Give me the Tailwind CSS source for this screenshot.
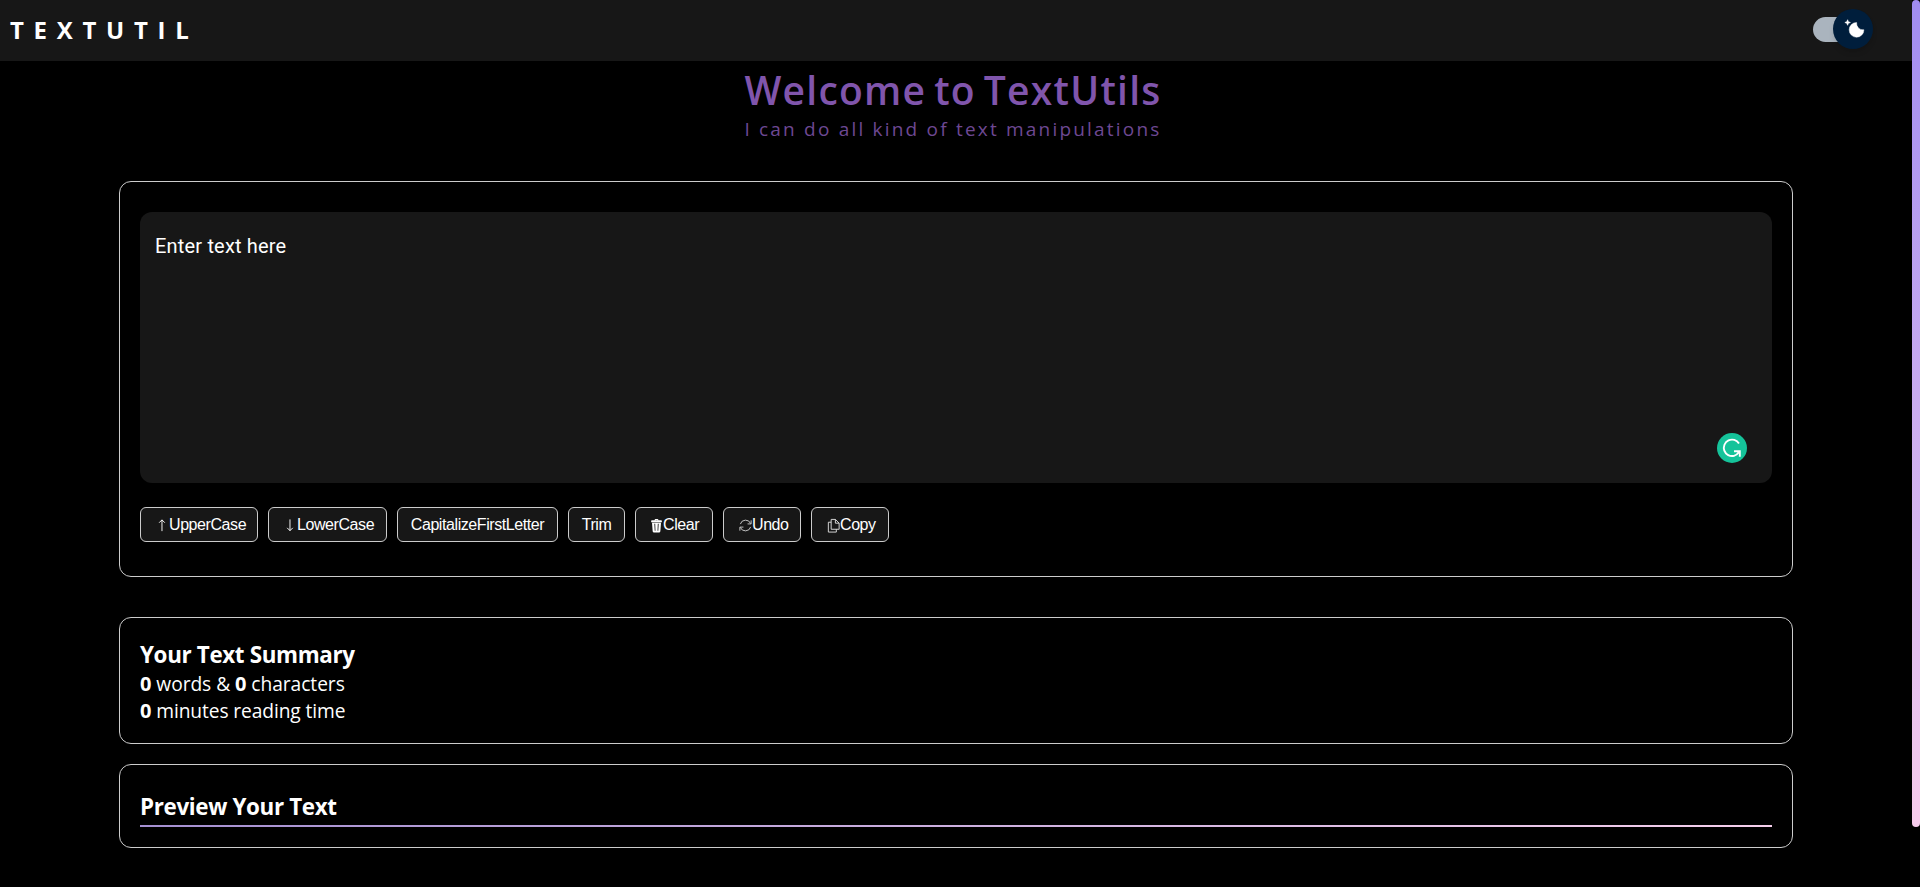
<!DOCTYPE html>
<html lang="en"><head><meta charset="utf-8"><title>TextUtils</title>
<script src="https://cdn.jsdelivr.net/npm/@tailwindcss/browser@4"></script></head>
<body class="relative h-[887px] overflow-hidden bg-black text-white font-['Open_Sans','Noto_Sans',sans-serif]">
<div class="w-[1912px]">
<nav class="flex h-[61px] items-center justify-between bg-[#171717] pb-0.5 pl-2.5 pr-[39px]">
<span class="text-[24px] leading-8 font-bold tracking-[9.7px]">TEXTUTIL</span>
<div class="relative h-10 w-[60px]">
<div class="mt-[7px] h-[25px] w-[52px] rounded-full bg-[#aab4be]"></div>
<div class="absolute -top-[1px] left-5 h-10 w-10 rounded-full bg-[#001e3c] shadow-md">
<svg class="mt-2 ml-2.5 size-[22px]" viewBox="0 0 20 20" fill="#fff"><path d="M4.2 2.5l-.7 1.8-1.8.7 1.8.7.7 1.8.6-1.8L6.700 5l-1.900-.7-.6-1.800z" stroke="#fff" stroke-width=".6"/><path d="M19.2 10.800a6.700 6.700 0 1 1-6.600-6.600 5.800 5.800 0 0 0 6.600 6.600z" transform="translate(-.2 .8)" stroke="#fff" stroke-width=".4"/></svg>
</div></div></nav>
<header class="flex h-[120px] flex-col items-center pr-1.5 whitespace-nowrap text-[#8055ac]">
<h1 class="mt-[3px] h-[53px] text-[39px] leading-[52px] font-semibold tracking-[1.250px] [word-spacing:-3.500px]">Welcome to TextUtils</h1>
<p class="h-6 text-[19px] leading-6 tracking-[2.2px] opacity-85">I can do all kind of text manipulations</p>
</header>
<main class="ml-[119px] w-[1674px]">
<section class="h-[396px] rounded-xl border border-[#ccc] px-5 pt-[30px]">
<div class="flex h-[271px] flex-col items-end justify-between rounded-xl bg-[#171717] pt-[19px] pr-[25px] pb-5 pl-[15px]">
<p class="w-full font-[Roboto,sans-serif] text-[20px] leading-[31px] tracking-[0.180px]">Enter text here</p>
<svg class="size-[30px]" viewBox="0 0 30 30"><circle cx="15" cy="15" r="15" fill="#15c39a"/><path d="M22 10.500A8.200 8.200 0 1 0 17 22.800Q20 22 22.500 18.500M17 18.200H22.800v5.500" fill="none" stroke="#fff" stroke-width="1.900"/></svg>
</div>
<div class="mt-6 flex gap-2.5 font-['Liberation_Sans',Arial,sans-serif] text-[16px] leading-[22px] tracking-[-0.42px] whitespace-nowrap">
<button class="flex h-[35px] w-[118px] items-center rounded-md border border-[#ccc] bg-[#171717] pt-px pl-[13px]"><svg class="size-[15px]" viewBox="0 0 16 16" fill="none" stroke="#fff"><path d="M8.500 14V2M5.500 5l3-3 3 3"/></svg>UpperCase</button>
<button class="flex h-[35px] w-[119px] items-center rounded-md border border-[#ccc] bg-[#171717] pt-px pl-[13px]"><svg class="size-[15px]" viewBox="0 0 16 16" fill="none" stroke="#fff"><path d="M8.500 1.500v12M5.500 10.500l3 3 3-3"/></svg>LowerCase</button>
<button class="h-[35px] w-[161px] rounded-md border border-[#ccc] bg-[#171717] pt-px">CapitalizeFirstLetter</button>
<button class="h-[35px] w-[57px] rounded-md border border-[#ccc] bg-[#171717] pt-px">Trim</button>
<button class="flex h-[35px] w-[78px] items-center rounded-md border border-[#ccc] bg-[#171717] pt-px pl-[13px]"><svg class="-mr-px size-[15px]" viewBox="0 0 16 16" fill="#fff"><path fill-rule="evenodd" d="M3 2.500h3V2q0-1 1-1h2q1 0 1 1v.5h3q.7 0 .7.800V4.500H2.300V3.300q0-.8.700-.8zM7 2v.5h2V2zM3.200 5h9.600l-.7 9q-.1 1.500-1.500 1.500H5.400Q4 15.500 3.900 14zM5.700 6l.4 7.500h.8L6.600 6zM9.400 6l-.3 7.500h.8l.4-7.500z"/></svg>Clear</button>
<button class="flex h-[35px] w-[78px] items-center rounded-md border border-[#ccc] bg-[#171717] pt-px pl-[14px]"><svg class="-mr-px size-[15px]" viewBox="0 0 16 16" fill="none" stroke="#ccc"><path d="M2.500 6.500A5.800 5.800 0 0 1 13.500 6M14 2.500V6.300h-3.800M13.500 9.500A5.800 5.800 0 0 1 2.500 10M2 13.500V9.700h3.800"/></svg>Undo</button>
<button class="flex h-[35px] w-[78px] items-center rounded-md border border-[#ccc] bg-[#171717] pt-px pl-[14px]"><svg class="-mr-px size-[15px]" viewBox="0 0 16 16" fill="none" stroke="#ddd"><path d="M5.500 1.500h4.500l4 4v6.500H5.500zM10 1.500v4h4M5.500 4.500h-3v10.500h8.500V12"/></svg>Copy</button>
</div>
</section>
<section class="mt-10 h-[127px] rounded-xl border border-[#ccc] px-5 pt-[21px]">
<h2 class="h-[31px] text-[22.400px] leading-8 font-bold tracking-[-0.35px]">Your Text Summary</h2>
<p class="text-[19.200px] leading-[27px] tracking-[-0.050px]"><b class="text-[20px]">0</b> words &amp; <b class="text-[20px]">0</b> characters</p>
<p class="text-[19.200px] leading-[27px] tracking-[-0.100px]"><b class="text-[20px]">0</b> minutes reading time</p>
</section>
<section class="mt-5 h-[84px] rounded-xl border border-[#ccc] px-5 pt-[26px]">
<h2 class="h-[34px] text-[22.400px] leading-8 font-bold tracking-[-0.35px]">Preview Your Text</h2>
<div class="h-0.5 bg-linear-to-r from-[#a590d2] to-[#f5cfec]"></div>
</section>
</main></div>
<div class="absolute top-0 right-0 h-[827px] w-2 rounded-full bg-linear-to-b from-[#a18cf1] to-[#f8ccec]"></div>
</body></html>
